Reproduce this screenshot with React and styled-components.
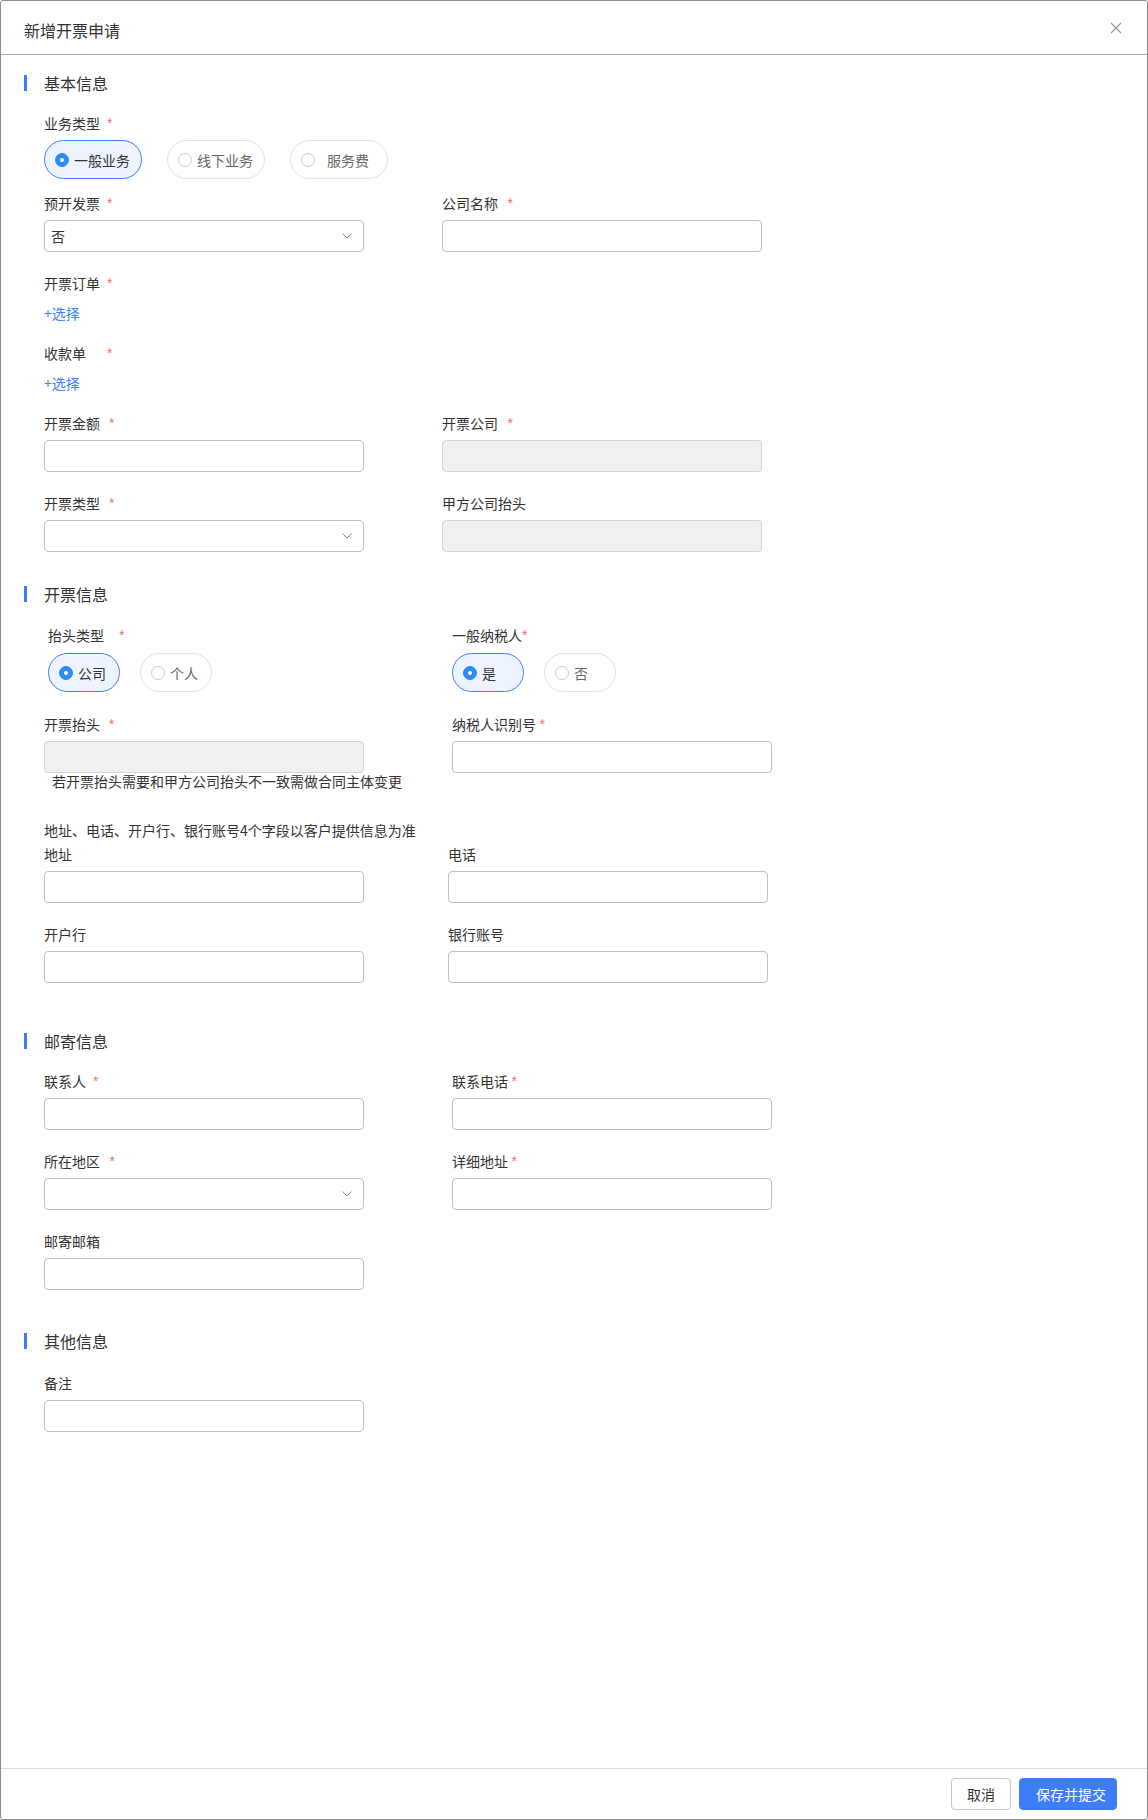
import React from "react";
import styled, { createGlobalStyle } from "styled-components";

const Global = createGlobalStyle`
  html, body { margin: 0; padding: 0; background: #fff; }
  body { font-family: "Noto Sans CJK SC", "Noto Sans", sans-serif; color: #333; }
  *, *::before, *::after { box-sizing: border-box; }
`;

const Dialog = styled.div`
  width: 1148px;
  height: 1820px;
  border: 1px solid #8c8c8c;
  border-radius: 3px;
  display: flex;
  flex-direction: column;
  background: #fff;
  overflow: hidden;
`;

const Header = styled.div`
  flex: none;
  height: 54px;
  border-bottom: 1px solid #a8a8a8;
  display: flex;
  align-items: center;
  justify-content: space-between;
  padding: 4px 25px 0 23px;
`;

const Title = styled.div`
  font-size: 16px;
  line-height: 22px;
  color: #333;
`;

const CloseBtn = styled.button`
  width: 12px;
  height: 12px;
  padding: 0;
  border: none;
  background: none;
  margin-top: -3px;
  display: flex;
  cursor: pointer;
`;

const Body = styled.div`
  flex: 1;
  padding: 16px 0 0 23px;
  overflow: hidden;
`;

const SectionHead = styled.div`
  display: flex;
  align-items: center;
  height: 24px;
  font-size: 16px;
  line-height: 24px;
  color: #333;
  margin-top: ${(p) => p.$mt || 0}px;
`;

const Bar = styled.span`
  width: 3px;
  height: 16px;
  background: #3b7cf6;
  margin-right: 17px;
`;

const Content = styled.div`
  padding: ${(p) => p.$pt}px 0 0 20px;
`;

const Row = styled.div`
  display: grid;
  grid-template-columns: 320px 320px;
  column-gap: ${(p) => p.$gap}px;
  margin-top: ${(p) => p.$mt || 0}px;
`;

const Field = styled.div`
  display: flex;
  flex-direction: column;
  margin-left: ${(p) => p.$indent || 0}px;
  margin-top: ${(p) => p.$mt || 0}px;
`;

const Label = styled.div`
  font-size: 14px;
  line-height: 20px;
  height: 21px;
  padding-bottom: 1px;
  color: #333;
  display: flex;
  align-items: center;
  white-space: nowrap;
`;

const Star = styled.span`
  color: #f56c6c;
  font-family: "Liberation Sans", Arial, sans-serif;
  font-size: 14px;
  line-height: 20px;
  margin-left: ${(p) => p.$gap}px;
`;

const Input = styled.div`
  height: 32px;
  margin-top: 6px;
  border: 1px solid ${(p) => (p.$disabled ? "#d3d3d3" : "#bfbfbf")};
  background: ${(p) => (p.$disabled ? "#f0f0f0" : "#fff")};
  border-radius: 4px;
`;

const Select = styled.div`
  height: 32px;
  margin-top: 6px;
  border: 1px solid #bfbfbf;
  background: #fff;
  border-radius: 4px;
  display: flex;
  align-items: center;
  justify-content: space-between;
  padding: 0 11px 0 6px;
  font-size: 14px;
  color: #333;
`;

const Pills = styled.div`
  display: flex;
  gap: ${(p) => p.$gap}px;
  margin-top: ${(p) => p.$mt}px;
`;

const Pill = styled.label`
  display: inline-flex;
  align-items: center;
  width: ${(p) => p.$w}px;
  height: 39px;
  padding-left: 10px;
  gap: 5px;
  border: 1px solid ${(p) => (p.$on ? "#4080f2" : "#dfe1e8")};
  background: ${(p) => (p.$on ? "#eef4ff" : "#fff")};
  border-radius: 20px;
  font-size: 14px;
  line-height: 20px;
  color: ${(p) => (p.$on ? "#333" : "#666")};
  cursor: pointer;
`;

const Dot = styled.span`
  flex: none;
  width: 14px;
  height: 14px;
  border-radius: 50%;
  border: 1px solid ${(p) => (p.$on ? "#2b8cf7" : "#c9c9c9")};
  background: ${(p) => (p.$on ? "#2b8cf7" : "#fff")};
  display: flex;
  align-items: center;
  justify-content: center;
  &::after {
    content: "";
    width: 4px;
    height: 4px;
    border-radius: 50%;
    background: ${(p) => (p.$on ? "#fff" : "transparent")};
  }
`;

const PillText = styled.span`
  min-width: ${(p) => p.$min || 0}px;
  text-align: center;
`;

const LinkText = styled.a`
  display: block;
  margin-top: 9px;
  font-size: 14px;
  line-height: 20px;
  color: #4080ff;
  text-decoration: none;
  cursor: pointer;
`;

const Hint = styled.div`
  font-size: 14px;
  line-height: 17px;
  color: #333;
  padding-left: 8px;
  white-space: nowrap;
`;

const Note = styled.div`
  margin-top: 30px;
  margin-bottom: 4px;
  font-size: 14px;
  line-height: 20px;
  color: #333;
  white-space: nowrap;
`;

const Footer = styled.div`
  flex: none;
  height: 51px;
  border-top: 1px solid #dcdcdc;
  display: flex;
  align-items: center;
  justify-content: flex-end;
  gap: 8px;
  padding-right: 30px;
`;

const Button = styled.button`
  height: 32px;
  width: ${(p) => p.$w}px;
  border-radius: 4px;
  font-family: inherit;
  font-size: 14px;
  line-height: 20px;
  white-space: nowrap;
  padding: ${(p) => (p.$primary ? "0 6px 0 16px" : "0")};
  text-align: ${(p) => (p.$primary ? "left" : "center")};
  border: 1px solid ${(p) => (p.$primary ? "#3c7ef8" : "#c5c5c5")};
  background: ${(p) => (p.$primary ? "#3c7ef8" : "#fff")};
  color: ${(p) => (p.$primary ? "#fff" : "#333")};
  cursor: pointer;
`;

const Chevron = () => (
  <svg width="10" height="6" viewBox="0 0 10 6" fill="none">
    <polyline points="0.5,0.5 5,5 9.5,0.5" stroke="#888" strokeWidth="1" />
  </svg>
);

const CloseIcon = () => (
  <svg width="12" height="12" viewBox="0 0 12 12" fill="none">
    <line x1="1" y1="1" x2="11" y2="11" stroke="#999" strokeWidth="1.2" />
    <line x1="11" y1="1" x2="1" y2="11" stroke="#999" strokeWidth="1.2" />
  </svg>
);

const FieldLabel = ({ text, star }) => (
  <Label>
    {text}
    {star !== undefined && <Star $gap={star}>*</Star>}
  </Label>
);

const Section = ({ title, mt, pt, children }) => (
  <>
    <SectionHead $mt={mt}>
      <Bar />
      {title}
    </SectionHead>
    <Content $pt={pt}>{children}</Content>
  </>
);

const RadioPills = ({ options, selected, w, gap, mt, min }) => (
  <Pills $gap={gap} $mt={mt}>
    {options.map((o) => (
      <Pill key={o} $w={w} $on={o === selected}>
        <Dot $on={o === selected} />
        <PillText $min={min}>{o}</PillText>
      </Pill>
    ))}
  </Pills>
);

export default function App() {
  return (
    <>
      <Global />
      <Dialog>
        <Header>
          <Title>新增开票申请</Title>
          <CloseBtn aria-label="close">
            <CloseIcon />
          </CloseBtn>
        </Header>
        <Body>
          <Section title="基本信息" pt={18}>
            <Field>
              <FieldLabel text="业务类型" star={7} />
              <RadioPills
                options={["一般业务", "线下业务", "服务费"]}
                selected="一般业务"
                w={98}
                gap={25}
                mt={6}
                min={56}
              />
            </Field>
            <Row $gap={78} $mt={14}>
              <Field>
                <FieldLabel text="预开发票" star={7} />
                <Select>
                  <span>否</span>
                  <Chevron />
                </Select>
              </Field>
              <Field>
                <FieldLabel text="公司名称" star={9.5} />
                <Input />
              </Field>
            </Row>
            <Field $mt={21}>
              <FieldLabel text="开票订单" star={7} />
              <LinkText>+选择</LinkText>
            </Field>
            <Field $mt={20}>
              <FieldLabel text="收款单" star={21} />
              <LinkText>+选择</LinkText>
            </Field>
            <Row $gap={78} $mt={20}>
              <Field>
                <FieldLabel text="开票金额" star={9} />
                <Input />
              </Field>
              <Field>
                <FieldLabel text="开票公司" star={9.5} />
                <Input $disabled />
              </Field>
            </Row>
            <Row $gap={78} $mt={21}>
              <Field>
                <FieldLabel text="开票类型" star={9} />
                <Select>
                  <span />
                  <Chevron />
                </Select>
              </Field>
              <Field>
                <FieldLabel text="甲方公司抬头" />
                <Input $disabled />
              </Field>
            </Row>
          </Section>

          <Section title="开票信息" mt={30} pt={19}>
            <Row $gap={88}>
              <Field $indent={4}>
                <FieldLabel text="抬头类型" star={15} />
                <RadioPills options={["公司", "个人"]} selected="公司" w={72} gap={20} mt={7} />
              </Field>
              <Field>
                <FieldLabel text="一般纳税人" star={0} />
                <RadioPills options={["是", "否"]} selected="是" w={72} gap={20} mt={7} />
              </Field>
            </Row>
            <Row $gap={88} $mt={22}>
              <Field>
                <FieldLabel text="开票抬头" star={9} />
                <Input $disabled />
                <Hint>若开票抬头需要和甲方公司抬头不一致需做合同主体变更</Hint>
              </Field>
              <Field>
                <FieldLabel text="纳税人识别号" star={3.5} />
                <Input />
              </Field>
            </Row>
            <Note>地址、电话、开户行、银行账号4个字段以客户提供信息为准</Note>
            <Row $gap={84}>
              <Field>
                <FieldLabel text="地址" />
                <Input />
              </Field>
              <Field>
                <FieldLabel text="电话" />
                <Input />
              </Field>
            </Row>
            <Row $gap={84} $mt={21}>
              <Field>
                <FieldLabel text="开户行" />
                <Input />
              </Field>
              <Field>
                <FieldLabel text="银行账号" />
                <Input />
              </Field>
            </Row>
          </Section>

          <Section title="邮寄信息" mt={46} pt={18}>
            <Row $gap={88}>
              <Field>
                <FieldLabel text="联系人" star={7} />
                <Input />
              </Field>
              <Field>
                <FieldLabel text="联系电话" star={3.5} />
                <Input />
              </Field>
            </Row>
            <Row $gap={88} $mt={21}>
              <Field>
                <FieldLabel text="所在地区" star={9.5} />
                <Select>
                  <span />
                  <Chevron />
                </Select>
              </Field>
              <Field>
                <FieldLabel text="详细地址" star={3.5} />
                <Input />
              </Field>
            </Row>
            <Row $gap={88} $mt={21}>
              <Field>
                <FieldLabel text="邮寄邮箱" />
                <Input />
              </Field>
            </Row>
          </Section>

          <Section title="其他信息" mt={39} pt={20}>
            <Row $gap={88}>
              <Field>
                <FieldLabel text="备注" />
                <Input />
              </Field>
            </Row>
          </Section>
        </Body>
        <Footer>
          <Button $w={60}>取消</Button>
          <Button $w={98} $primary>
            保存并提交
          </Button>
        </Footer>
      </Dialog>
    </>
  );
}
